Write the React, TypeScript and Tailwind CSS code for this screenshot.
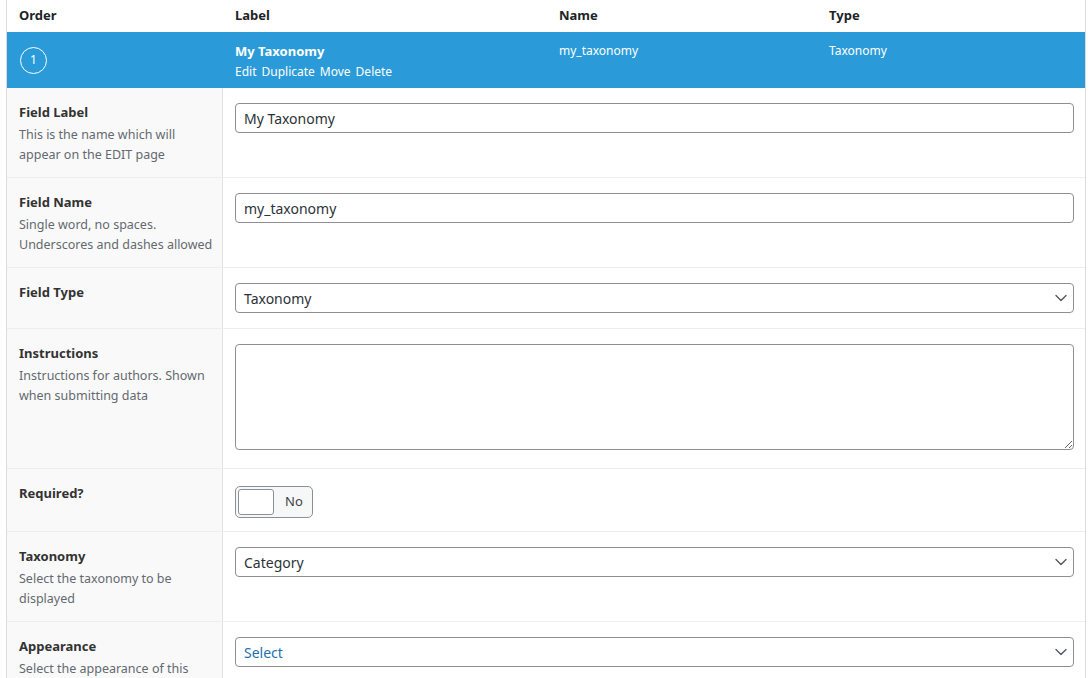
import { ChevronDown } from 'lucide-react';

const font = { fontFamily: '"Noto Sans", "Open Sans", sans-serif' };

interface Setting {
  label: string;
  desc?: string[];
  rowClass: string;
  control: 'text' | 'select' | 'textarea' | 'toggle';
  value?: string;
  valueClass?: string;
}

const settings: Setting[] = [
  {
    label: 'Field Label',
    desc: ['This is the name which will', 'appear on the EDIT page'],
    rowClass: 'h-[90px]',
    control: 'text',
    value: 'My Taxonomy',
  },
  {
    label: 'Field Name',
    desc: ['Single word, no spaces.', 'Underscores and dashes allowed'],
    rowClass: 'h-[90px]',
    control: 'text',
    value: 'my_taxonomy',
  },
  { label: 'Field Type', rowClass: 'h-[61px]', control: 'select', value: 'Taxonomy' },
  {
    label: 'Instructions',
    desc: ['Instructions for authors. Shown', 'when submitting data'],
    rowClass: 'h-[140px]',
    control: 'textarea',
  },
  { label: 'Required?', rowClass: 'h-[63px]', control: 'toggle' },
  {
    label: 'Taxonomy',
    desc: ['Select the taxonomy to be', 'displayed'],
    rowClass: 'h-[90px]',
    control: 'select',
    value: 'Category',
  },
  {
    label: 'Appearance',
    desc: ['Select the appearance of this', 'field'],
    rowClass: 'h-[90px]',
    control: 'select',
    value: 'Select',
    valueClass: 'text-[#2271b1]',
  },
];

function Control({ s }: { s: Setting }) {
  if (s.control === 'text') {
    return (
      <input
        readOnly
        value={s.value}
        className="w-full h-[30px] rounded border border-[#8c8f94] bg-white px-2 text-[14px] text-[#2c3338] outline-none"
        style={font}
      />
    );
  }
  if (s.control === 'select') {
    return (
      <div className="flex h-[30px] w-full items-center justify-between rounded border border-[#8c8f94] bg-white pl-2 pr-[2px]">
        <span className={`text-[14px] ${s.valueClass ?? 'text-[#2c3338]'}`}>{s.value}</span>
        <ChevronDown className="h-5 w-5 text-[#50575e]" strokeWidth={1.6} />
      </div>
    );
  }
  if (s.control === 'textarea') {
    return (
      <textarea
        readOnly
        className="block h-[106px] w-full rounded border border-[#8c8f94] bg-white outline-none"
      />
    );
  }
  return (
    <div className="mt-[2px] flex h-[32px] w-[78px] items-center rounded-[5px] border border-[#8c8f94] bg-[#f6f7f7] p-[2px]">
      <div className="h-[26px] w-[36px] rounded-[3px] border border-[#8c8f94] bg-white" />
      <span className="ml-[11px] text-[13px] text-[#3c434a]">No</span>
    </div>
  );
}

export default function App() {
  return (
    <div className="min-h-screen bg-white pl-[6px] pr-[3px]" style={font}>
      <div className="border-l border-r border-[#dcdcde]">
        {/* Column headings */}
        <div className="grid h-[32px] grid-cols-[216px_324px_270px_1fr] items-center text-[13px] font-bold text-[#1d2327]">
          <div className="px-3">Order</div>
          <div className="px-3">Label</div>
          <div className="px-3">Name</div>
          <div className="px-3">Type</div>
        </div>

        {/* Open field row */}
        <div className="grid h-[56px] grid-cols-[216px_324px_270px_1fr] bg-[#2a9bd8] text-white">
          <div className="flex items-center px-3">
            <div className="ml-px flex h-[27px] w-[27px] items-center justify-center rounded-full border border-white text-[12px]">
              1
            </div>
          </div>
          <div className="px-3 pt-[10px]">
            <div className="text-[13px] font-bold leading-[18px]">My Taxonomy</div>
            <div className="mt-[4px] flex gap-[5px] text-[12px] leading-[16px]">
              <span>Edit</span>
              <span>Duplicate</span>
              <span>Move</span>
              <span>Delete</span>
            </div>
          </div>
          <div className="px-3 pt-[11px] text-[12px] leading-[16px]">my_taxonomy</div>
          <div className="px-3 pt-[11px] text-[12px] leading-[16px]">Taxonomy</div>
        </div>

        {/* Field settings */}
        {settings.map((s) => (
          <div key={s.label} className={`flex border-b border-[#eeeeee] ${s.rowClass}`}>
            <div className="w-[216px] shrink-0 border-r border-[#e1e1e1] bg-[#f9f9f9] px-3 pt-[15px]">
              <div className="text-[13px] font-bold leading-[18px] text-[#333]">{s.label}</div>
              {s.desc && (
                <p className="mt-[4px] whitespace-nowrap text-[12.5px] leading-[19.5px] text-[#646970]">
                  {s.desc.map((line, i) => (
                    <span key={i} className="block">
                      {line}
                    </span>
                  ))}
                </p>
              )}
            </div>
            <div className="flex-1 px-3 pr-[11px] pt-[15px]">
              <Control s={s} />
            </div>
          </div>
        ))}
      </div>
    </div>
  );
}
